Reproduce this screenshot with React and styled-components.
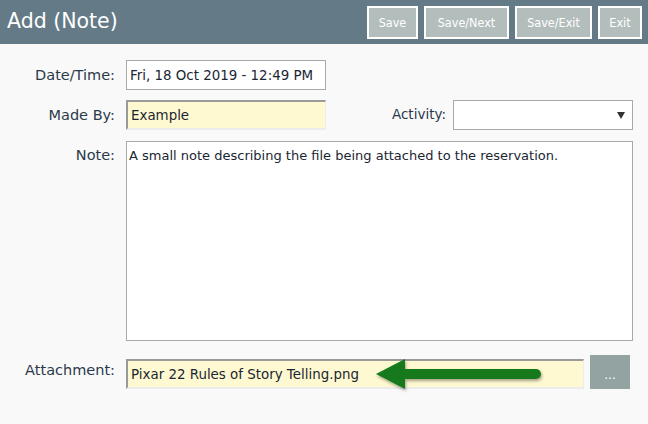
import React from "react";
import styled, { createGlobalStyle } from "styled-components";

const Global = createGlobalStyle`
  html, body { margin: 0; padding: 0; background: #f9f9f9; }
  body { font-family: "DejaVu Sans", Verdana, sans-serif; }
  * { box-sizing: border-box; }
`;

const Page = styled.div`
  width: 648px;
  height: 424px;
  background: #f9f9f9;
  overflow: hidden;
`;

const Header = styled.header`
  height: 44px;
  background: #647a87;
  display: flex;
  align-items: flex-start;
  justify-content: space-between;
  padding: 0 6px 0 7px;
`;

const Title = styled.h1`
  margin: 0;
  padding-top: 9px;
  font-size: 20.5px;
  font-weight: normal;
  color: #ffffff;
  line-height: 24px;
`;

const Actions = styled.div`
  display: flex;
  gap: 6px;
  padding-top: 6px;
`;

const HeaderButton = styled.button`
  height: 33px;
  width: ${(p) => p.$w}px;
  border: 2px solid #ffffff;
  background: #b3bebc;
  color: #ffffff;
  font-family: "DejaVu Sans Condensed", "DejaVu Sans", sans-serif;
  font-size: 12.5px;
  padding: 0;
  cursor: pointer;
`;

const Form = styled.div`
  display: grid;
  grid-template-columns: 115px 507px;
  column-gap: 11px;
  padding-top: 16px;
`;

const Label = styled.label`
  text-align: right;
  color: #2b3a4b;
  font-size: 14.5px;
  line-height: 18px;
  padding-top: ${(p) => p.$top || 0}px;
  align-self: ${(p) => p.$align || "center"};
  margin-top: ${(p) => p.$mt || 0}px;
`;

const Field = styled.div`
  display: flex;
  align-items: ${(p) => p.$items || "center"};
  margin-top: ${(p) => p.$mt || 0}px;
`;

const TextInput = styled.input`
  width: ${(p) => p.$w}px;
  height: 30px;
  font-family: "DejaVu Sans", Verdana, sans-serif;
  font-size: 13.4px;
  color: #1b2633;
  padding: 0 3px;
  background: ${(p) => (p.$yellow ? "#fef9d0" : "#ffffff")};
  border: 1px solid #a9a9a9;
  ${(p) =>
    p.$yellow &&
    `
    border-top: 2px solid #9a9a9a;
    border-left: 2px solid #9a9a9a;
    border-right: 1px solid #ececec;
    border-bottom: 2px solid #ececec;
  `}
  outline: none;
`;

const Spacer = styled.div`
  flex: 1;
  display: flex;
  justify-content: flex-end;
  align-items: center;
  gap: 7px;
`;

const InlineLabel = styled.span`
  color: #2b3a4b;
  font-size: 13.5px;
  margin-top: -3px;
`;

const SelectBox = styled.div`
  width: 180px;
  height: 30px;
  background: #ffffff;
  border: 1px solid #a9a9a9;
  display: flex;
  align-items: center;
  justify-content: flex-end;
  padding-right: 7px;
`;

const Caret = styled.span`
  width: 0;
  height: 0;
  border-left: 4px solid transparent;
  border-right: 4px solid transparent;
  border-top: 7px solid #333;
`;

const NoteArea = styled.div`
  width: 100%;
  height: 200px;
  background: #ffffff;
  border: 1px solid #a9a9a9;
  padding: 5px 2px;
  font-size: 13px;
  line-height: 17px;
  color: #1b2633;
`;

const AttachWrap = styled.div`
  position: relative;
`;

const BrowseButton = styled.button`
  width: 40px;
  height: 34px;
  margin: -4px 0 0 6px;
  background: #93a3a1;
  border: none;
  color: #ffffff;
  font-size: 12px;
  font-family: "DejaVu Sans", sans-serif;
  padding: 6px 0 0;
`;

const Arrow = styled.svg`
  position: absolute;
  left: 247px;
  top: -4px;
  pointer-events: none;
`;

export default function App() {
  return (
    <Page>
      <Global />
      <Header>
        <Title>Add (Note)</Title>
        <Actions>
          <HeaderButton $w={51}>Save</HeaderButton>
          <HeaderButton $w={85}>Save/Next</HeaderButton>
          <HeaderButton $w={77}>Save/Exit</HeaderButton>
          <HeaderButton $w={44}>Exit</HeaderButton>
        </Actions>
      </Header>
      <Form>
        <Label>Date/Time:</Label>
        <Field>
          <TextInput $w={200} defaultValue="Fri, 18 Oct 2019 - 12:49 PM" />
        </Field>

        <Label $mt={10}>Made By:</Label>
        <Field $mt={10}>
          <TextInput $w={200} $yellow defaultValue="Example" />
          <Spacer>
            <InlineLabel>Activity:</InlineLabel>
            <SelectBox>
              <Caret />
            </SelectBox>
          </Spacer>
        </Field>

        <Label $mt={11} $align="start" $top={5}>Note:</Label>
        <Field $mt={11}>
          <NoteArea>
            A small note describing the file being attached to the reservation.
          </NoteArea>
        </Field>

        <Label $mt={18} $align="start" $top={2}>Attachment:</Label>
        <Field $mt={18} $items="flex-start">
          <AttachWrap>
            <TextInput $w={458} $yellow defaultValue="Pixar 22 Rules of Story Telling.png" />
            <Arrow width="175" height="40" viewBox="0 0 175 40">
              <defs>
                <filter id="sh" x="-10%" y="-30%" width="130%" height="170%">
                  <feDropShadow dx="1" dy="2" stdDeviation="1.5" floodColor="#000" floodOpacity="0.35" />
                </filter>
              </defs>
              <g filter="url(#sh)" fill="#127a1f">
                <polygon points="3,19 32,4 32,34" />
                <rect x="28" y="14" width="140" height="10" rx="5" />
              </g>
            </Arrow>
          </AttachWrap>
          <BrowseButton>...</BrowseButton>
        </Field>
      </Form>
    </Page>
  );
}
